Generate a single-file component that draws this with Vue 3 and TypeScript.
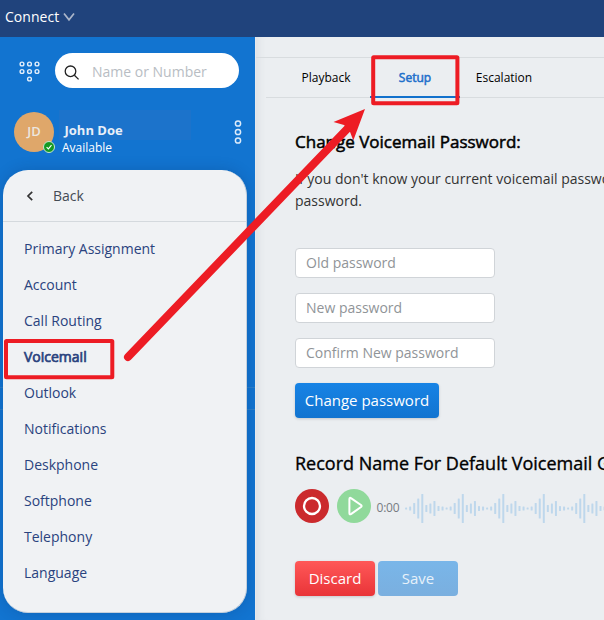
<script setup lang="ts">
import { ref } from 'vue'

interface Tab { label: string; cls: string }

const menu: string[] = [
  'Primary Assignment', 'Account', 'Call Routing', 'Voicemail', 'Outlook',
  'Notifications', 'Deskphone', 'Softphone', 'Telephony', 'Language',
]
const activeMenu = ref('Voicemail')
const tabs: Tab[] = [
  { label: 'Playback', cls: 'playback' },
  { label: 'Setup', cls: 'setup' },
  { label: 'Escalation', cls: 'escalation' },
]
const activeTab = ref('Setup')
const fields: string[] = ['Old password', 'New password', 'Confirm New password']

const pattern = [2, 4, 11, 20, 29, 7, 10, 15, 5, 4]
const bars = Array.from({ length: 50 }, (_, i) => ({
  x: 0.1 + i * 4.05,
  h: pattern[i % pattern.length],
}))
const keypad = [[4, 4], [11.5, 4], [19, 4], [4, 11.5], [11.5, 11.5], [19, 11.5], [11.5, 19]]
</script>

<template>
  <div class="app">
    <header class="topbar">
      <span>Connect</span>
      <svg class="caret" width="12" height="10" viewBox="0 0 12 10"><path d="M1 1.5 L6 7.8 L11 1.5" /></svg>
    </header>
    <div class="body">
      <aside class="sidebar">
        <div class="search-row">
          <svg class="keypad" width="23" height="23" viewBox="0 0 23 23">
            <circle v-for="(p, i) in keypad" :key="i" :cx="p[0]" :cy="p[1]" r="1.9" />
          </svg>
          <div class="search">
            <svg width="16" height="16" viewBox="0 0 16 16"><circle cx="6.5" cy="6.3" r="5.3" /><path d="M10.4 10.2 L14.6 14.4" /></svg>
            <span>Name or Number</span>
          </div>
        </div>
        <div class="user">
          <div class="avatar">
            <span>JD</span>
            <svg class="status" width="12" height="12" viewBox="0 0 12 12"><circle cx="6" cy="6" r="5.5" /><path d="M3.6 6.1 L5.4 7.9 L8.5 4.2" /></svg>
          </div>
          <div class="who">
            <div class="name">John Doe</div>
            <div class="avail">Available</div>
          </div>
          <svg class="more" width="10" height="26" viewBox="0 0 10 26"><circle cx="5" cy="4.5" r="2.6" /><circle cx="5" cy="13" r="2.6" /><circle cx="5" cy="21.5" r="2.6" /></svg>
        </div>
        <div class="panel">
          <div class="back">
            <svg width="8" height="12" viewBox="0 0 8 12"><path d="M6.2 1.8 L2 6 L6.2 10.2" /></svg>
            <span>Back</span>
          </div>
          <nav class="menu">
            <a v-for="m in menu" :key="m" :class="{ active: m === activeMenu }" @click="activeMenu = m">{{ m }}</a>
          </nav>
        </div>
      </aside>
      <main class="content">
        <div class="tabs">
          <div v-for="t in tabs" :key="t.label" class="tab" :class="[t.cls, { active: t.label === activeTab }]" @click="activeTab = t.label">{{ t.label }}</div>
        </div>
        <h2 class="h-password">Change Voicemail Password:</h2>
        <p>If you don't know your current voicemail password<br>password.</p>
        <div class="fields">
          <div v-for="f in fields" :key="f" class="field">{{ f }}</div>
        </div>
        <button class="btn change">Change password</button>
        <h2 class="h-record">Record Name For Default Voicemail Greeting</h2>
        <div class="recorder">
          <svg class="rec" width="34" height="34" viewBox="0 0 34 34"><circle cx="17" cy="17" r="17" /><circle class="ring" cx="17" cy="17" r="8" /></svg>
          <svg class="play" width="34" height="34" viewBox="0 0 34 34"><circle cx="17" cy="17" r="17" /><path d="M12.4 10.2 Q12.4 8 14.3 9.3 L24 16 Q25.2 17 24 18 L14.3 24.9 Q12.4 26.1 12.4 24 Z" /></svg>
          <span class="time">0:00</span>
          <svg class="wave" width="204" height="30" viewBox="0 0 204 30">
            <rect v-for="(b, i) in bars" :key="i" :x="b.x" :y="14.5 - b.h / 2" width="2" :height="b.h" rx=".5" />
          </svg>
        </div>
        <div class="actions">
          <button class="btn discard">Discard</button>
          <button class="btn save">Save</button>
        </div>
      </main>
    </div>
    <svg class="annotations" width="604" height="620" viewBox="0 0 604 620">
      <rect x="6" y="341" width="106.3" height="36.2" rx=".5" />
      <rect x="373.2" y="57.2" width="84.2" height="46" rx=".5" />
      <path class="shaft" d="M128 357 L349 127" />
      <path class="head" d="M365 109 L353.3 140.5 L349.5 130.5 L344 125 L333.5 122 Z" />
    </svg>
  </div>
</template>

<style>
body { margin: 0; overflow: hidden; }
</style>

<style scoped>
.app { position: relative; width: 604px; height: 620px; overflow: hidden; font-family: "Open Sans", sans-serif; font-size: 14px; display: flex; flex-direction: column; }
svg { display: block; flex: none; }
.topbar { height: 37px; flex: none; box-sizing: border-box; background: #20437c; color: #fff; display: flex; align-items: center; padding: 0 0 3px 5px; gap: 4px; line-height: 20px; letter-spacing: .05px; }
.caret path { fill: none; stroke: #aab5c9; stroke-width: 1.7; }
.body { flex: 1; display: flex; min-height: 0; }
.sidebar { width: 255px; flex: none; background: linear-gradient(#2c7fc9, #2c7fc9) 0 350px / 100% 1px no-repeat, linear-gradient(#2c7fc9, #2c7fc9) 0 372px / 100% 1px no-repeat, #1274d0; }
.search-row { display: flex; padding: 16px 0 0 17.5px; height: 35px; }
.keypad { margin-top: 6.5px; }
.keypad circle { fill: none; stroke: #e2eefa; stroke-width: 1.4; }
.search { margin-left: 14.5px; width: 184px; height: 35px; border-radius: 18px; background: #fff; box-sizing: border-box; display: flex; align-items: center; padding: 1px 0 0 9px; color: #b8bdc3; gap: 12px; font-size: 14px; }
.search span { padding-top: 1px; }
.search svg { margin-top: 4px; fill: none; stroke: #222; stroke-width: 1.3; }
.user { height: 81px; display: flex; padding-left: 14px; box-sizing: border-box; }
.avatar { position: relative; width: 40px; height: 40px; margin-top: 24px; border-radius: 50%; background: #dfa76a; color: #ece6df; font-weight: 600; font-size: 13px; line-height: 39px; text-align: center; }
.status { position: absolute; right: -1px; bottom: -1px; fill: #149a23; stroke: #c7e5cf; stroke-width: 1; }
.status path { fill: none; stroke: #fff; stroke-width: 1.1; }
.who { margin: 22px 0 0 5px; width: 132px; color: #fff; }
.name { height: 30px; background: #1c73cb; font-size: 13px; font-weight: 700; line-height: 41px; padding-left: 5.5px; box-sizing: border-box; color: #e9eff8; }
.avail { font-size: 12px; line-height: 16px; padding-left: 3px; }
.more { margin: 31px 0 0 42px; fill: none; stroke: #dcebfa; stroke-width: 1.5; }
.panel { margin: 1px 8px 0 3px; height: 443px; box-sizing: border-box; border-radius: 25px; background: #f0f2f4; border-right: 1px solid #c5d0dc; border-bottom: 1px solid #c5d0dc; box-shadow: 0 0 14px rgba(0, 40, 90, .22); }
.back { height: 52px; box-sizing: border-box; border-bottom: 1px solid #d4d9dd; display: flex; align-items: center; gap: 19px; padding-left: 23px; color: #444b54; }
.back svg { fill: none; stroke: #333; stroke-width: 1.7; }
.menu { display: flex; flex-direction: column; padding: 9px 0 0 21px; color: #2a437e; }
.menu a { height: 36px; line-height: 36px; }
.menu a.active { -webkit-text-stroke: .7px currentColor; }
.content { flex: 1; min-width: 0; overflow: hidden; background: #ebeef1; box-sizing: border-box; border-left: 1px solid #e5e9ed; padding: 20px 0 0 39px; color: #000; box-shadow: inset 9px 0 9px -7px rgba(70, 80, 90, .09); }
.tabs { margin-left: -39px; border-top: 1px solid #d8dcdf; height: 41px; box-sizing: border-box; display: flex; background: linear-gradient(#d8dcdf, #d8dcdf) 10px 100% / 400px 1px no-repeat; font-size: 12px; line-height: 39px; }
.tab { box-sizing: border-box; text-align: center; }
.playback { width: 114px; padding-left: 26px; }
.setup { width: 90px; }
.escalation { width: 88px; }
.tab.active { color: #1f70cb; -webkit-text-stroke: .55px currentColor; border-bottom: 2px solid #1271cc; }
h2 { margin: 0; font-size: 17px; font-weight: 400; -webkit-text-stroke: .5px #000; line-height: 24px; white-space: nowrap; }
.h-password { margin-top: 32px; }
p { margin: 14px 0 0; line-height: 22px; white-space: nowrap; color: #333; }
.fields { display: flex; flex-direction: column; gap: 15px; margin-top: 36px; }
.field { width: 200px; height: 30px; box-sizing: border-box; border: 1px solid #d0d4d8; border-radius: 4px; background: #fff; padding-left: 10px; line-height: 28px; color: #909498; }
.btn { border: 0; padding: 0; border-radius: 4px; height: 35px; color: #fff; font: 15px/35px "Open Sans", sans-serif; box-shadow: 0 1px 3px rgba(0, 0, 0, .16); }
.change { display: block; margin-top: 15px; width: 144px; background: linear-gradient(#1783e5, #1274d0); }
.h-record { margin-top: 33px; font-size: 18px; -webkit-text-stroke-width: .35px; }
.recorder { display: flex; margin-top: 14px; height: 34px; align-items: center; }
.rec { fill: #cb2a2d; }
.rec .ring { fill: none; stroke: #fff; stroke-width: 2.3; }
.play { margin-left: 8px; fill: #90d99b; }
.play path { fill: none; stroke: #fff; stroke-width: 2; stroke-linejoin: round; }
.time { flex: none; margin: 3px 0 0 5.5px; width: 28.5px; font-size: 12px; letter-spacing: -.2px; color: #777b82; }
.wave { margin-top: 5px; fill: #bed7ec; }
.actions { display: flex; gap: 3px; margin-top: 38px; }
.discard { width: 80px; background: linear-gradient(#ff5858, #e93438); }
.save { width: 80px; background: linear-gradient(#79b6e9, #7aafdf); color: #e7f1fa; box-shadow: none; }
.annotations { position: absolute; left: 0; top: 0; pointer-events: none; fill: none; stroke: #ed1c24; stroke-width: 4; }
.annotations .shaft { stroke-width: 8; stroke-linecap: round; }
.annotations .head { fill: #ed1c24; stroke: none; }
</style>
